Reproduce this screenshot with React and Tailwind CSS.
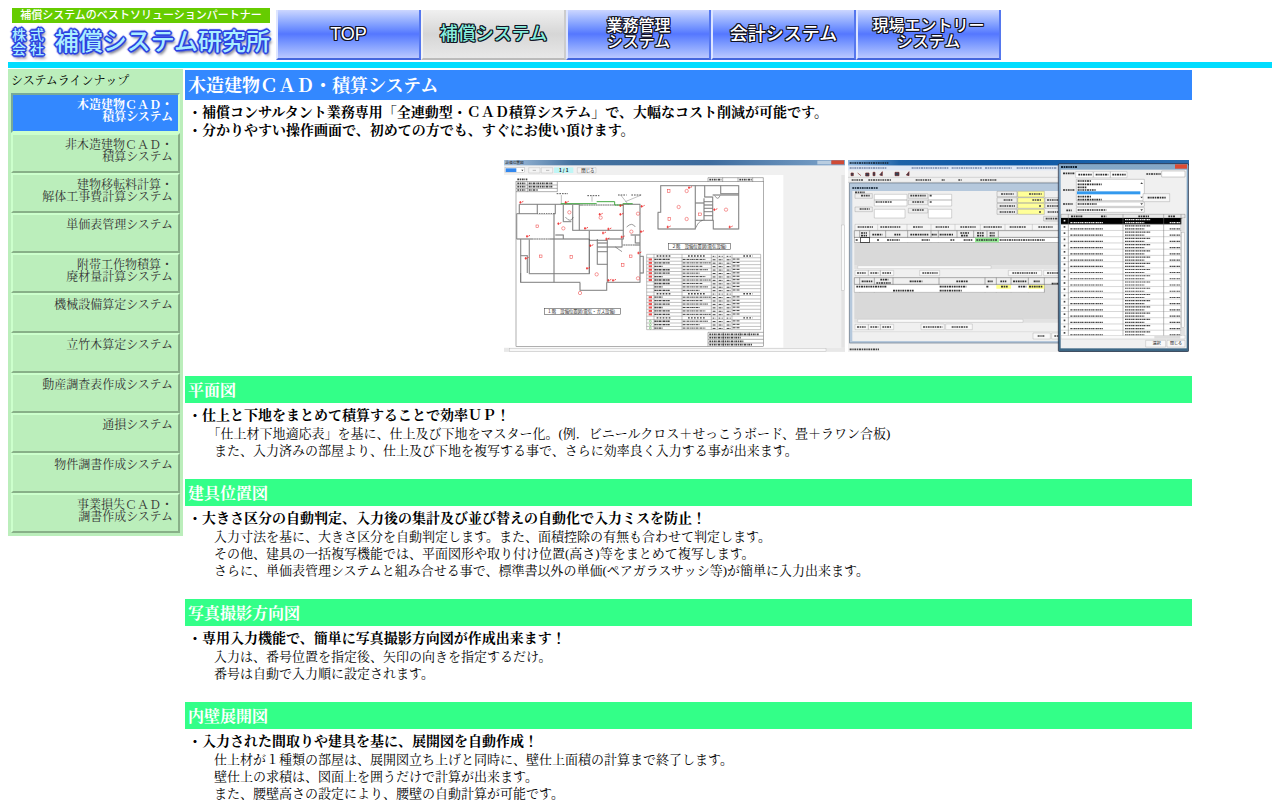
const NAV = [
  { lines: ["TOP"] },
  { lines: ["補償システム"], active: true },
  { lines: ["業務管理", "システム"] },
  { lines: ["会計システム"] },
  { lines: ["現場エントリー", "システム"] },
];

const MENU = [
  ["木造建物ＣＡＤ・", "積算システム"],
  ["非木造建物ＣＡＤ・", "積算システム"],
  ["建物移転料計算・", "解体工事費計算システム"],
  ["単価表管理システム"],
  ["附帯工作物積算・", "廃材量計算システム"],
  ["機械設備算定システム"],
  ["立竹木算定システム"],
  ["動産調査表作成システム"],
  ["通損システム"],
  ["物件調書作成システム"],
  ["事業損失ＣＡＤ・", "調書作成システム"],
];

const SECTIONS = [
  {
    title: "平面図",
    lead: "・仕上と下地をまとめて積算することで効率ＵＰ！",
    body: [
      "「仕上材下地適応表」を基に、仕上及び下地をマスター化。(例．ビニールクロス＋せっこうボード、畳＋ラワン合板)",
      "また、入力済みの部屋より、仕上及び下地を複写する事で、さらに効率良く入力する事が出来ます。",
    ],
  },
  {
    title: "建具位置図",
    lead: "・大きさ区分の自動判定、入力後の集計及び並び替えの自動化で入力ミスを防止！",
    body: [
      "入力寸法を基に、大きさ区分を自動判定します。また、面積控除の有無も合わせて判定します。",
      "その他、建具の一括複写機能では、平面図形や取り付け位置(高さ)等をまとめて複写します。",
      "さらに、単価表管理システムと組み合せる事で、標準書以外の単価(ペアガラスサッシ等)が簡単に入力出来ます。",
    ],
  },
  {
    title: "写真撮影方向図",
    lead: "・専用入力機能で、簡単に写真撮影方向図が作成出来ます！",
    body: [
      "入力は、番号位置を指定後、矢印の向きを指定するだけ。",
      "番号は自動で入力順に設定されます。",
    ],
  },
  {
    title: "内壁展開図",
    lead: "・入力された間取りや建具を基に、展開図を自動作成！",
    body: [
      "仕上材が１種類の部屋は、展開図立ち上げと同時に、壁仕上面積の計算まで終了します。",
      "壁仕上の求積は、図面上を囲うだけで計算が出来ます。",
      "また、腰壁高さの設定により、腰壁の自動計算が可能です。",
    ],
  },
];

const OUTLINE_DARK =
  "[text-shadow:1px_0_0_#112,-1px_0_0_#112,0_1px_0_#112,0_-1px_0_#112,1px_1px_0_#112,-1px_-1px_0_#112,1px_-1px_0_#112,-1px_1px_0_#112]";
const OUTLINE_BLUE =
  "[text-shadow:1px_0_0_#2a3fe0,-1px_0_0_#2a3fe0,0_1px_0_#2a3fe0,0_-1px_0_#2a3fe0,1px_1px_0_#2a3fe0,-1px_-1px_0_#2a3fe0,1px_-1px_0_#2a3fe0,-1px_1px_0_#2a3fe0,2px_0_1px_#3b50e8,-2px_0_1px_#3b50e8,0_2px_1px_#3b50e8,0_-2px_1px_#3b50e8,2px_3px_3px_#667]";

function Header() {
  return (
    <header className="flex h-[54px] font-['Liberation_Sans','Noto_Sans_CJK_JP',sans-serif]">
      <a href="#home" className="block w-[268px] shrink-0 pl-1 pr-[6px]">
        <span className="block h-[15px] bg-[#66cc00] text-center text-[11px] font-medium leading-[15px] whitespace-nowrap text-white">
          補償システムのベストソリューションパートナー
        </span>
        <span className={"flex items-center justify-between pt-[3px] font-medium whitespace-nowrap text-[#aaeeff] " + OUTLINE_BLUE}>
          <span className="text-[14px] leading-[14px]">
            <span className="block">株 式</span>
            <span className="block">会 社</span>
          </span>
          <span className="text-[24px] leading-[32px]">補償システム研究所</span>
        </span>
      </a>
      <nav className="flex pt-[2px]">
        {NAV.map((n) => (
          <a
            key={n.lines[0]}
            href="#nav"
            className={
              "flex h-[50px] w-[145px] items-center justify-center border-r-2 border-b-2 border-l-2 text-center font-medium whitespace-nowrap " +
              (n.lines.length > 1 ? "text-[16px] leading-[16px] " : "text-[18px] leading-[18px] ") +
              OUTLINE_DARK +
              (n.active
                ? " border-r-[#cccccc] border-b-[#bbbbbb] border-l-[#f4f4f4] bg-linear-to-b from-[#f0f0f0] via-[#d6d6d6] to-[#e8e8e8] text-[#88eedd]"
                : " border-r-[#5577ee] border-b-[#4466dd] border-l-[#dde5ff] bg-linear-to-b from-[#ccd6ff] via-[#5577ff] to-[#bbc8ff] text-white")
            }
          >
            <span>
              {n.lines.map((l) => (
                <span key={l} className="block">
                  {l}
                </span>
              ))}
            </span>
          </a>
        ))}
      </nav>
    </header>
  );
}

function Sidebar() {
  return (
    <aside className="w-[175px] shrink-0 bg-[#bbeebb] p-[3px] text-[12px] leading-[12px]">
      <h2 className="pt-[3px] pb-[6px] leading-[12px]">システムラインナップ</h2>
      <ul>
        {MENU.map((m, i) => (
          <li key={m.join("")}>
            <a
              href="#menu"
              className={
                "block min-h-10 w-[169px] border-2 pr-[5px] text-right whitespace-nowrap " +
                (i === 0
                  ? "border-t-[#77aa99] border-r-[#ccffcc] border-b-[#ccffcc] border-l-[#77aa99] bg-[#3388ff] pt-1 font-bold text-white"
                  : "border-t-[#ccffcc] border-r-[#88b088] border-b-[#88b088] border-l-[#ccffcc] pt-1 text-[#333333]")
              }
            >
              {m.map((l) => (
                <span key={l} className="block">
                  {l}
                </span>
              ))}
            </a>
          </li>
        ))}
      </ul>
    </aside>
  );
}

const WALLS =
  "M58 148H166V176H112M112 148V176M58 148V176M50 176H164M50 176V252H162M162 176V382M166 148H238V226H218V150M190 150V200H214M238 150H370M370 148V226H238M370 148H420V382H322M370 226V252H322M392 240H420M62 252V302H82V354M62 302V382H240V406H320V382M88 254V356H268V252H162M62 354V382M268 252V356M268 228V256H322V382M292 252V328H322M292 264H322M292 276H322M292 290H322M322 276H366V252M366 270H420M420 304H430V354H420M166 240H190V252M406 242V264H420";
const UPPER_WALLS =
  "M482 92H716V222H640V196H586V222H474V172H482ZM586 92V196M614 92V126H638V196M662 92V116H716M638 120H716M612 130V196M612 140H638M612 150H638M612 160H638M612 170H638M612 182H638M586 144H612";
const LAMPS = [
  [112, 214], [190, 220], [122, 304], [214, 306], [290, 358], [302, 188], [368, 330],
  [394, 230], [414, 176], [392, 304], [414, 370], [208, 172], [506, 108], [560, 108],
  [536, 156], [508, 192], [560, 192], [678, 164], [600, 178], [240, 414],
];
const OUTLETS = [
  [62, 142], [198, 142], [362, 152], [426, 154], [82, 244], [256, 220], [326, 222], [362, 178],
  [272, 272], [262, 340], [326, 376], [340, 376], [78, 310], [310, 234], [320, 252], [416, 294],
  [424, 230], [568, 98], [644, 164], [504, 216], [690, 216], [300, 178], [176, 206], [366, 246],
];

function PlanShot() {
  const rows = Array.from({ length: 22 }, (_, i) => 298 + i * 10.3);
  return (
    <svg viewBox="12 15 1023 576" className="w-[341px] shrink" role="img" aria-label="平面図画面" fontFamily="'Noto Sans CJK JP', sans-serif">
      <defs>
        <linearGradient id="bar1" x1="0" x2="1">
          <stop offset="0" stopColor="#a9c4e0" />
          <stop offset=".2" stopColor="#44729f" />
          <stop offset=".6" stopColor="#3d6b9d" />
          <stop offset="1" stopColor="#7fa5cb" />
        </linearGradient>
      </defs>
      <rect x="12" y="15" width="1023" height="576" fill="#f0f0f0" />
      <rect x="12" y="15" width="1023" height="16" fill="url(#bar1)" />
      <text x="16" y="28" fontSize="11" fill="#222">設備位置図</text>
      <rect x="952" y="17" width="42" height="11" fill="#b9cde0" />
      <rect x="994" y="16" width="38" height="12" fill="#d04a35" />
      <rect x="15" y="38" width="58" height="15" fill="#fff" stroke="#999" />
      <rect x="17" y="40" width="32" height="11" fill="#3388ee" />
      <path d="M64 44h6l-3 5z" fill="#222" />
      <path d="M86 38h34v16H86zM124 38h34v16h-34zM232 38h56v16h-56z" fill="#f4f4f4" stroke="#aaa" />
      <path d="M98 46h10M138 46h10" stroke="#bbb" strokeWidth="3" />
      <rect x="162" y="37" width="58" height="17" fill="#bff6f6" />
      <text x="177" y="51" fontSize="14" fontWeight="700" fill="#111">1 / 1</text>
      <text x="244" y="51" fontSize="13" fill="#111">閉じる</text>
      <rect x="12" y="60" width="838" height="518" fill="#fff" />
      <rect x="1024" y="60" width="10" height="518" fill="#e3e3e3" />
      <rect x="1025" y="210" width="8" height="196" fill="#fafafa" stroke="#aaa" />
      <rect x="12" y="579" width="1023" height="11" fill="#e8e8e8" />
      <rect x="28" y="580" width="950" height="9" fill="#f8f8f8" stroke="#aaa" />
      <g fill="none" stroke="#555" strokeWidth="1.4">
        <rect x="48" y="80" width="742" height="494" />
        <path d="M48 90H172M48 100H172M48 110H172V80M82 80V110" />
        <path d="M624 68H790V80M624 68V80M668 68V80M714 68V80M758 68V80" />
        <path d="M624 532H790M624 543H790M624 553H790M624 564H790M624 532V574M670 532V574M720 532V543M748 532V543" />
      </g>
      <g fill="none" stroke="#c4c4c4" strokeWidth="4">
        <path d={WALLS} />
        <path d={UPPER_WALLS} />
      </g>
      <g fill="none" stroke="#555" strokeWidth="1.4">
        <path d={WALLS} />
        <path d={UPPER_WALLS} />
      </g>
      <g stroke="#fff" strokeWidth="3" strokeDasharray="3 4" fill="none">
        <path d="M114 176H160M242 382H318M340 270H404M100 252H150M250 150H360" />
      </g>
      <path d="M182 146H290M290 140H344V150M344 150H368M368 146H398" stroke="#44aa44" strokeWidth="3" fill="none" />
      <path d="M184 120V144M276 124V140M362 120L386 150M424 120L376 140" stroke="#777" strokeWidth="1.4" fill="none" />
      <path d="M170 116H204M262 122H298M354 120H380M394 120H424" stroke="#555" strokeWidth="3" strokeDasharray="5 3" fill="none" />
      <path d="M196 186q16 20 24 0M346 276l20 14M380 216q16-16 26 0M644 122q10 16 16 0M588 218q6-18 20-22" stroke="#444" fill="none" strokeWidth="1.6" />
      <g fill="none" stroke="#ee4444" strokeWidth="1.6">
        {LAMPS.map(([x, y], i) =>
          i % 3 === 0 || i === 2 ? (
            <rect key={i} x={x - 4} y={y - 4} width="8" height="8" />
          ) : (
            <circle key={i} cx={x} cy={y} r="5" />
          )
        )}
      </g>
      <g stroke="#e22" strokeWidth="2.4">
        {OUTLETS.map(([x, y], i) => (
          <path key={i} d={`M${x - 4} ${y}h7m-4 -4v8m5 -5l4 -2`} fill="none" />
        ))}
      </g>
      <rect x="506" y="265" width="186" height="18" fill="#fff" stroke="#333" strokeWidth="1.5" />
      <text x="515" y="279" fontSize="13" fill="#222">２階　設備位置図(電気設備)</text>
      <rect x="133" y="460" width="228" height="18" fill="#fff" stroke="#333" strokeWidth="1.5" />
      <text x="142" y="474" fontSize="13" fill="#222">１階　設備位置図(電気・ガス設備)</text>
      <g stroke="#666" strokeWidth="1.2" fill="none">
        <path d="M440 298V524M462 298V524M546 298V524M634 298V524M652 298V524M672 298V524M696 298V524M782 298V524" />
        {rows.concat([524]).map((y) => (
          <path key={y} d={`M440 ${y}H782`} />
        ))}
      </g>
      {rows.map((y, i) => {
        const head = i === 0 || i === 11 || i === 18;
        const red = !head && (i < 8 || (i > 11 && i < 18));
        return (
          <g key={y} stroke="#444" strokeWidth="4" strokeDasharray={head ? "5 4" : "7 1.5 3 1.5"}>
            <path d={head ? `M470 ${y + 5}H512` : `M463 ${y + 5}H${i % 3 ? 510 : 488}`} />
            <path d={`M${head ? 564 : 548} ${y + 5}H${head ? 614 : 600 + ((i * 7) % 5) * 8}`} strokeWidth={head ? 4 : 3} />
            <path d={`M638 ${y + 6}h10M656 ${y + 6}h12M680 ${y + 6}h12`} strokeWidth="3" />
            {!head && <path d={`M698 ${y + 4}h22`} strokeWidth="3" />}
            {head && <path d={`M730 ${y + 5}h28`} />}
            {red && <path d={`M446 ${y + 5}h10`} stroke="#f05050" strokeWidth="6" strokeDasharray="none" />}
            {i > 18 && <circle cx="451" cy={y + 5} r="3" stroke="#44aa44" strokeWidth="1.5" fill="none" strokeDasharray="none" />}
          </g>
        );
      })}
      <g stroke="#444" strokeWidth="5" strokeDasharray="6 2 3 2">
        <path d="M52 73H82M52 85H78M52 95H78M52 105H78M86 85H158M86 95H158M86 105H114M628 74H664M718 74H756M628 538H776M628 548H722M628 559H732M628 569H758" />
      </g>
    </svg>
  );
}

const dash = "6 2 4 2";

function EstimateShot() {
  const items = Array.from({ length: 19 }, (_, i) => 189 + i * 18.7);
  return (
    <svg viewBox="9 15 1023 576" className="w-[341px] shrink" role="img" aria-label="積算システム画面" fontFamily="'Noto Sans CJK JP', sans-serif">
      <defs>
        <linearGradient id="bar2" x1="0" x2="1">
          <stop offset="0" stopColor="#8fb6dd" />
          <stop offset=".15" stopColor="#1d62a8" />
          <stop offset=".5" stopColor="#0b57a5" />
          <stop offset="1" stopColor="#2a6cae" />
        </linearGradient>
        <linearGradient id="dlg" x1="0" x2="0" y1="0" y2="1">
          <stop offset="0" stopColor="#86a9c8" />
          <stop offset="1" stopColor="#3c6684" />
        </linearGradient>
      </defs>
      <rect x="9" y="15" width="1023" height="576" fill="#f0f0f0" />
      <rect x="9" y="15" width="1023" height="17" fill="url(#bar2)" />
      <path d="M14 24H130" stroke="#123" strokeWidth="5" strokeDasharray={dash} />
      <rect x="9" y="32" width="640" height="14" fill="#dfe8f5" />
      <path d="M14 39H126M200 39H310M320 39H410M420 39H500M515 39H636" stroke="#7788a8" strokeWidth="5" strokeDasharray={dash} />
      <path d="M18 54h7v8h-7zM38 54l10 8M62 54h10v9H62zM84 52h6v10h-6zM104 60l8-10v12zM150 52h12v10h-12zM184 60l8-10v12z" fill="#345" stroke="#722" strokeWidth="2" />
      <path d="M9 67H648M9 82H648" stroke="#999" />
      <path d="M20 75H56M70 75H140M212 75H258M290 75H300M340 75H350M406 75H454" stroke="#444" strokeWidth="5" strokeDasharray={dash} />
      <rect x="14" y="84" width="640" height="480" fill="#b5c8dc" stroke="#678" strokeWidth="2" />
      <path d="M22 99H98" stroke="#345" strokeWidth="6" strokeDasharray={dash} />
      <rect x="22" y="108" width="632" height="450" fill="#f0f0f0" />
      <g fill="#fff" stroke="#888">
        <path d="M88 118h98v17H88zM88 135h98v18H88zM88 163h92v26H88zM250 118h70v17h-70zM250 135h70v18h-70zM250 163h70v26h-70z" />
        <path d="M190 116h58v14h-58zM190 135h58v14h-58zM190 160h58v14h-58zM30 116h52v14H30zM30 156h52v14H30z" fill="#eee" />
      </g>
      <path d="M48 122H74M44 162H74M196 122H242M202 141H238M202 165H238M92 141H140M254 122H262M254 141H262M30 112H60" stroke="#444" strokeWidth="5" strokeDasharray={dash} />
      <g fill="#ffff99" stroke="#777">
        <path d="M518 109h80v17h-80zM518 128h80v15h-80zM518 145h80v15h-80zM518 163h80v15h-80z" />
        <path d="M456 109h60v16h-60zM456 128h60v15h-60zM456 145h60v15h-60zM456 163h60v15h-60zM600 128h50v15h-50zM600 145h50v15h-50zM596 184h54v14h-54z" fill="#eee" />
      </g>
      <path d="M468 117H506M476 135H502M464 153H510M464 171H510M552 117H590M562 135H590M582 153H590M582 171H590M606 135H640M606 153H640M608 171H640M602 191H640" stroke="#444" strokeWidth="5" strokeDasharray={dash} />
      <path d="M30 208H654V226H30zM98 208v18M186 208v18M258 208v18M330 208v18M406 208v18M480 208v18M562 208v18" fill="#f5f5f5" stroke="#999" />
      <path d="M38 216H84M106 216H166M204 216H234M272 216H314M346 216H392M416 216H470M494 216H544M580 216H624" stroke="#444" strokeWidth="5" strokeDasharray={dash} />
      <rect x="28" y="227" width="626" height="104" fill="#d9d9d9" />
      <path d="M28 227H654V247H28zM44 227v35M74 227v35M122 227v35M188 227v35M258 227v35M280 227v35M336 227v35M386 227v35M426 227v35M460 227v35" fill="#f0f0f0" stroke="#666" strokeWidth="1.5" />
      <rect x="28" y="248" width="626" height="14" fill="#fff" stroke="#666" />
      <rect x="390" y="248" width="72" height="14" fill="#99ee99" />
      <rect x="46" y="248" width="28" height="14" fill="none" stroke="#111" strokeWidth="2" />
      <path d="M48 234H66M48 242H66M82 239H112M148 239H166M196 239H252M260 239H276M284 239H326M346 234H372M348 242H370M396 234H416M396 242H416M434 234H450M434 242H450M32 255H38M96 255H104M126 255H164M230 255H254M316 255H330M356 255H384M394 255H458M464 255H600" stroke="#333" strokeWidth="5" strokeDasharray={dash} />
      <path d="M28 331H654V342H28z" fill="#e2e2e2" />
      <path d="M38 332H438V341H38z" fill="#fafafa" stroke="#aaa" />
      <path d="M30 346h40v16H30zM70 346h36v16H70zM106 346h40v16h-40zM224 346h60v16h-60zM490 346h100v16H490zM596 346h58v16h-58z" fill="#f8f8f8" stroke="#999" />
      <path d="M36 354H64M76 354H100M112 354H140M232 354H278M502 354H576M606 354H640" stroke="#444" strokeWidth="5" strokeDasharray={dash} />
      <rect x="28" y="368" width="626" height="124" fill="#d9d9d9" />
      <path d="M28 368H654V388H28zM44 368v44M88 368v44M144 368v44M282 368v44M420 368v44M454 368v44M498 368v44M550 368v44M598 368v44" fill="#f0f0f0" stroke="#666" strokeWidth="1.5" />
      <path d="M28 389H598V412H28z" fill="#fff" stroke="#777" />
      <path d="M454 390h44v11h-44zM550 390h48v11h-48z" fill="#ffff88" />
      <path d="M50 379H82M106 374H130M94 384H138M194 379H232M334 379H370M428 379H444M466 379H484M504 379H544M566 379H584M620 386H640M34 395H124M284 395H364M424 395H432M468 395H490M520 395H544M552 395H594M144 407H206M284 407H350" stroke="#333" strokeWidth="5" strokeDasharray={dash} />
      <path d="M28 492H654V503H28z" fill="#e2e2e2" />
      <path d="M38 493H534V502H38z" fill="#fafafa" stroke="#aaa" />
      <path d="M30 508h40v16H30zM70 508h36v16H70zM106 508h40v16h-40zM228 507h70v17h-70zM302 507h80v17h-80zM564 534h52v18h-52zM620 534h34v18h-34z" fill="#f8f8f8" stroke="#999" />
      <path d="M36 516H64M76 516H100M112 516H140M234 516H292M320 516H368M578 543H598M628 543H640" stroke="#444" strokeWidth="5" strokeDasharray={dash} />
      <path d="M22 530H648" stroke="#bbb" />
      <path d="M14 583H102" stroke="#444" strokeWidth="5" strokeDasharray={dash} />
      <rect x="640" y="26" width="391" height="564" rx="4" fill="url(#dlg)" stroke="#223" strokeWidth="2" />
      <path d="M648 36H698" stroke="#123" strokeWidth="6" strokeDasharray={dash} />
      <path d="M990 28h36v13h-36z" fill="#dd4c33" />
      <rect x="647" y="44" width="378" height="536" fill="#f0f0f0" />
      <path d="M692 50h52v18h-52zM746 50h50v18h-50zM796 50h50v18h-50z" fill="#fff" stroke="#999" />
      <path d="M654 55H690M700 59H740M752 59H790M802 59H842M904 57H948M654 105H688M654 147H684M664 166H680" stroke="#333" strokeWidth="5" strokeDasharray={dash} />
      <path d="M950 48h70v18h-70zM694 73h204v64H694zM694 141h204v13H694zM694 158h204v14H694z" fill="#fff" stroke="#777" />
      <rect x="696" y="109" width="190" height="9" fill="#3399ee" />
      <path d="M698 78H738M698 88H770M698 97H726M698 105H752M698 125H738M698 134H770M698 147H756M698 165H784" stroke="#333" strokeWidth="5" strokeDasharray={dash} />
      <path d="M890 82l4 5h-8zM890 130l4-5h-8zM890 150l4-5h-8zM890 168l4-5h-8z" fill="#444" />
      <path d="M894 116h80v24h-80z" fill="#f7f7f7" stroke="#888" />
      <path d="M908 128H962" stroke="#333" strokeWidth="5" strokeDasharray={dash} />
      <rect x="648" y="178" width="372" height="366" fill="#fff" />
      <path d="M648 178H1020V189H648z" fill="#e8e8e8" stroke="#555" />
      <path d="M678 184H712M768 184H784M880 184H912M970 184H990" stroke="#333" strokeWidth="5" strokeDasharray={dash} />
      <rect x="648" y="189" width="364" height="19" fill="#000" />
      {items.map((y, i) => (
        <g key={y} stroke={i === 0 ? "#eee" : "#444"} strokeDasharray="5 1.5 3 1.5">
          <path d={`M648 ${y + 18.7}H1012`} stroke="#999" strokeDasharray="none" strokeWidth="1.2" />
          <path d={`M656 ${y + 8}h6`} strokeWidth="5" />
          <path d={`M676 ${y + 14}H774`} strokeWidth="3.5" />
          <path d={`M840 ${y + 5}H916M840 ${y + 14}H898`} strokeWidth="3.5" />
          <path d={`M974 ${y + 14}H1006`} strokeWidth="3.5" />
        </g>
      ))}
      <path d="M670 178V544M834 178V544M956 178V544M1008 178V544" stroke="#777" strokeWidth="1.5" />
      <rect x="1009" y="190" width="11" height="350" fill="#e2e2e2" />
      <rect x="1010" y="232" width="9" height="286" fill="#fafafa" stroke="#999" />
      <rect x="648" y="542" width="372" height="10" fill="#fafafa" stroke="#aaa" />
      <rect x="928" y="543" width="78" height="8" fill="#ddd" />
      <path d="M902 556h60v20h-60zM966 556h54v20h-54z" fill="#f8f8f8" stroke="#999" />
      <text x="923" y="571" fontSize="12" fill="#111">選択</text>
      <text x="975" y="571" fontSize="12" fill="#111">閉じる</text>
    </svg>
  );
}

export default function App() {
  return (
    <div lang="ja" className="bg-white p-2 font-['Liberation_Serif','Noto_Serif_CJK_JP','Noto_Serif_JP',serif] text-black">
      <Header />
      <div className="h-[6px] bg-[#00ddff]" />
      <div className="flex items-start gap-[2px] pt-px">
        <Sidebar />
        <main className="mr-20 min-w-0 flex-1 pt-px">
          <h1 className="bg-[#3388ff] px-[3px] pt-[2px] text-[18px] leading-[28px] font-bold text-white">木造建物ＣＡＤ・積算システム</h1>
          <div className="px-[3px] pt-1 text-[14px] leading-[18px] font-bold">
            <p>・補償コンサルタント業務専用「全連動型・ＣＡＤ積算システム」で、大幅なコスト削減が可能です。</p>
            <p>・分かりやすい操作画面で、初めての方でも、すぐにお使い頂けます。</p>
          </div>
          <div className="flex justify-end gap-[3px] pt-5 pr-[3px] pb-6">
            <PlanShot />
            <EstimateShot />
          </div>
          {SECTIONS.map((s) => (
            <section key={s.title} className="pb-5">
              <h2 className="bg-[#33ff88] px-[3px] pt-[2px] text-[16px] leading-[25px] font-bold text-white">{s.title}</h2>
              <div className="px-[3px] pt-1 text-[13px] leading-[17px]">
                <h3 className="text-[14px] leading-[18px] font-bold">{s.lead}</h3>
                {s.body.map((b) => (
                  <p key={b} className="whitespace-pre-wrap">
                    {"\u3000\u3000" + b}
                  </p>
                ))}
              </div>
            </section>
          ))}
        </main>
      </div>
    </div>
  );
}
